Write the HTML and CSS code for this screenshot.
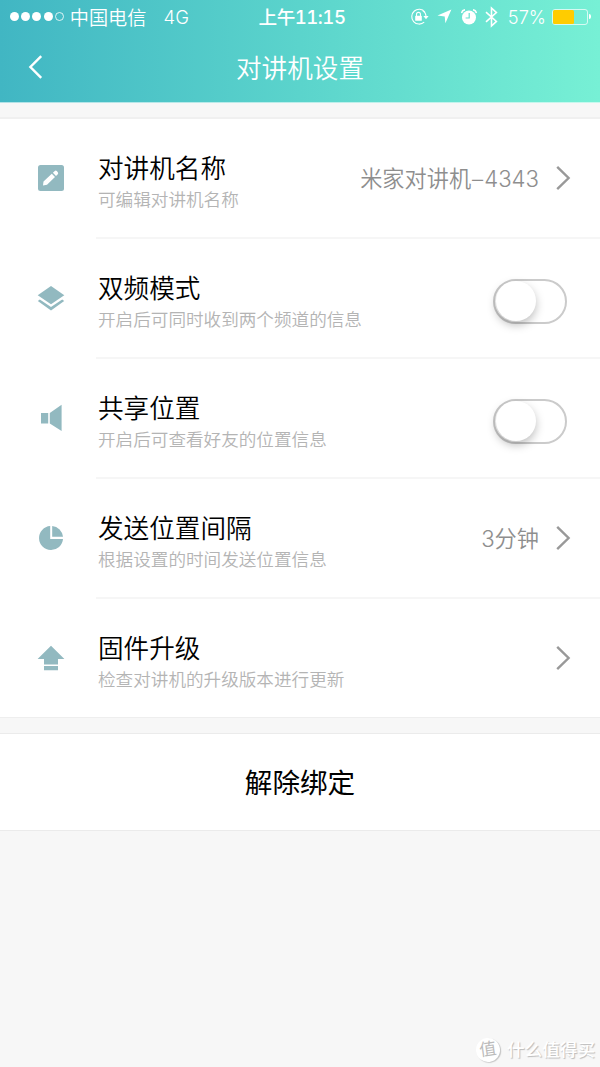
FILE: index.html
```html
<!DOCTYPE html>
<html lang="zh-CN">
<head>
    <meta charset="UTF-8">
    <meta name="viewport" content="width=device-width, initial-scale=1.0">
    <title>对讲机设置</title>
    <link rel="stylesheet" href="styles.css">
</head>
<body>
    <header class="header">
        <div class="status">
            <div class="status-left">
                <div class="signal"><i></i><i></i><i></i><i></i><i class="empty"></i></div>
                <span class="carrier">中国电信</span>
                <span class="network">4G</span>
            </div>
            <div class="time">上午11:15</div>
            <div class="status-right">
                <svg class="lock" width="19" height="18" viewBox="0 0 19 18">
                    <path d="M14.9 4 A7.4 7.4 0 1 0 14.2 14.1 M12.6 2.5 A7.4 7.4 0 0 1 16 9" fill="none" stroke="#fff" stroke-width="1.1"/>
                    <path d="M13.4 8h5.2L16 11.2z" fill="#fff"/>
                    <rect x="5.2" y="7.8" width="6.6" height="5" rx=".6" fill="#fff"/>
                    <path d="M6.5 8V6.4a2 2 0 0 1 4 0V8" fill="none" stroke="#fff" stroke-width="1.1"/>
                </svg>
                <svg class="location" width="15" height="15" viewBox="0 0 15 15">
                    <path d="M14.4.5 8.4 14.3 7.7 7.4.5 6.6z" fill="#fff"/>
                </svg>
                <svg class="alarm" width="16" height="16" viewBox="0 0 16 16">
                    <circle cx="8" cy="8.5" r="7" fill="#fff"/>
                    <path d="M.6 4.2A4 4 0 0 1 4 .8M15.4 4.2A4 4 0 0 0 12 .8" fill="none" stroke="#fff" stroke-width="1.4"/>
                    <path d="M8.2 4v5H4.6" fill="none" stroke="#66dfcf" stroke-width="1.2"/>
                </svg>
                <svg class="bluetooth" width="13" height="22" viewBox="0 0 13 22">
                    <path d="M1 6.2 11.4 15.4 6.5 20V2L11.4 6.6 1 15.8" fill="none" stroke="#fff" stroke-width="1.6"/>
                </svg>
                <span class="percent">57%</span>
                <div class="battery"><div class="level"></div></div>
                <div class="battery-cap"></div>
            </div>
        </div>
        <div class="nav">
            <svg class="back" width="16" height="24" viewBox="0 0 16 24">
                <path d="M13.2 1.2 2.4 12l10.8 10.8" fill="none" stroke="#fff" stroke-width="2.4"/>
            </svg>
            <h1 class="title">对讲机设置</h1>
        </div>
    </header>

    <ul class="list">
        <li class="item">
            <div class="icon">
                <svg width="28" height="28" viewBox="0 0 28 28">
                    <rect x="1" y="1" width="26" height="26" rx="2.5" fill="#92b9c0"/>
                    <path d="M6 21.6 6.5 17.6 14.8 9.8 18 13 10 20.8zM15.9 8.8 17.8 7Q18.8 6.2 19.8 7.1L20.8 8.2Q21.6 9.2 20.8 10.2L19 12z" fill="#fff"/>
                </svg>
            </div>
            <div class="body">
                <div class="text">
                    <div class="name">对讲机名称</div>
                    <div class="desc">可编辑对讲机名称</div>
                </div>
                <div class="value">米家对讲机<span class="dash">–</span>4343</div>
                <svg class="arrow" width="15" height="26" viewBox="0 0 15 26"><path d="M1.2 1.8 12.6 13 1.2 24.2" fill="none" stroke="#999" stroke-width="2.4"/></svg>
            </div>
        </li>
        <li class="item">
            <div class="icon">
                <svg width="28" height="28" viewBox="0 0 28 28">
                    <path d="M14 2 27.3 11.2 14 20.2.7 11.2z" fill="#92b9c0"/>
                    <path d="M.8 17.1 2.8 15.6 14 23 25.2 15.6 27.2 17.1 14 26.4z" fill="#92b9c0"/>
                </svg>
            </div>
            <div class="body">
                <div class="text">
                    <div class="name">双频模式</div>
                    <div class="desc">开启后可同时收到两个频道的信息</div>
                </div>
                <div class="switch"><div class="knob"></div></div>
            </div>
        </li>
        <li class="item">
            <div class="icon">
                <svg width="28" height="28" viewBox="0 0 28 28">
                    <path d="M4 9h7.2v10.4H4zM12.8 9 24.6.8v26.3L12.8 19.4z" fill="#92b9c0"/>
                </svg>
            </div>
            <div class="body">
                <div class="text">
                    <div class="name">共享位置</div>
                    <div class="desc">开启后可查看好友的位置信息</div>
                </div>
                <div class="switch"><div class="knob"></div></div>
            </div>
        </li>
        <li class="item">
            <div class="icon">
                <svg width="28" height="28" viewBox="0 0 28 28">
                    <path d="M13.2 2A12 12 0 1 0 26 14.9H13.2z" fill="#92b9c0"/>
                    <path d="M15.2 2A12 12 0 0 1 26 12.8H15.2z" fill="#92b9c0"/>
                </svg>
            </div>
            <div class="body">
                <div class="text">
                    <div class="name">发送位置间隔</div>
                    <div class="desc">根据设置的时间发送位置信息</div>
                </div>
                <div class="value">3分钟</div>
                <svg class="arrow" width="15" height="26" viewBox="0 0 15 26"><path d="M1.2 1.8 12.6 13 1.2 24.2" fill="none" stroke="#999" stroke-width="2.4"/></svg>
            </div>
        </li>
        <li class="item">
            <div class="icon">
                <svg width="28" height="28" viewBox="0 0 28 28">
                    <path d="M14 1.8 27.4 15H21v5.4H7V15H.6zM7 22.1h14v4.2H7z" fill="#92b9c0"/>
                </svg>
            </div>
            <div class="body">
                <div class="text">
                    <div class="name">固件升级</div>
                    <div class="desc">检查对讲机的升级版本进行更新</div>
                </div>
                <svg class="arrow" width="15" height="26" viewBox="0 0 15 26"><path d="M1.2 1.8 12.6 13 1.2 24.2" fill="none" stroke="#999" stroke-width="2.4"/></svg>
            </div>
        </li>
    </ul>

    <button class="unbind">解除绑定</button>

    <footer class="watermark">
        <span class="logo">值</span>
        <span class="brand">什么值得买</span>
    </footer>
</body>
</html>
```

FILE: styles.css
```css
* {
    box-sizing: border-box;
}

body {
    margin: 0;
    height: 1067px;
    display: flex;
    flex-direction: column;
    background-color: #f7f7f7;
    font-family: Inter, "Noto Sans CJK SC", sans-serif;
    font-weight: 350;
    color: #000;
    overflow: hidden;
}

/* header */
.header {
    height: 103px;
    background: linear-gradient(to right, #41b6c3, #5bd4cc 50%, #77f0d5);
    border-bottom: 1px solid rgba(255, 255, 255, 0.6);
    color: #fff;
}

.status {
    height: 32px;
    display: grid;
    grid-template-columns: 1fr auto 1fr;
    align-items: center;
    padding: 0 9px 0 10px;
    font-size: 19px;
    line-height: 32px;
}

.status-left, .status-right {
    display: flex;
    align-items: center;
    height: 32px;
}

.status-right {
    justify-content: flex-end;
}

.signal {
    display: flex;
    gap: 2.2px;
}

.signal i {
    width: 9px;
    height: 9px;
    border-radius: 50%;
    background-color: #fff;
}

.signal .empty {
    background: none;
    border: 1px solid rgba(255, 255, 255, 0.8);
}

.carrier {
    margin-left: 6px;
    padding-top: 2px;
    font-size: 19.2px;
}

.network {
    margin-left: 17px;
    padding-top: 1px;
    font-size: 18.5px;
}

.time {
    margin-left: 3px;
    padding-top: 1px;
    font-size: 18.6px;
    font-weight: 500;
    font-feature-settings: "tnum";
    letter-spacing: -0.5px;
}

.lock {
    margin-right: -1px;
}

.location {
    margin-left: 9px;
}

.alarm {
    margin-left: 9px;
}

.bluetooth {
    margin-left: 8px;
}

.percent {
    margin-left: 10px;
    padding-top: 1px;
    font-size: 18.3px;
}

.battery {
    width: 36px;
    height: 16px;
    margin-left: 6px;
    border: 1px solid rgba(255, 255, 255, 0.7);
    border-radius: 3px;
}

.level {
    width: 21px;
    height: 14px;
    border-radius: 1.5px;
    background-color: #ffcc00;
}

.battery-cap {
    width: 2px;
    height: 5px;
    margin-left: 1px;
    border-radius: 0 2px 2px 0;
    background-color: #fff;
}

.nav {
    height: 70px;
    display: grid;
    grid-template-columns: 60px 1fr 60px;
    align-items: center;
}

.back {
    margin-left: 28px;
}

.title {
    margin: 0;
    padding-top: 3px;
    text-align: center;
    font-size: 25.6px;
    line-height: 67px;
    font-weight: 350;
}

/* settings list */
.list {
    margin: 14px 0 0;
    padding: 0;
    list-style: none;
    background-color: #fff;
    border-top: 2px solid #f0f0f0;
}

.item {
    height: 120px;
    display: flex;
}

.icon {
    width: 96px;
    padding: 45px 0 0 37px;
}

.body {
    flex: 1;
    display: flex;
    align-items: center;
    padding: 0 29px 0 2px;
    border-bottom: 2px solid #f6f6f6;
}

.item:last-child {
    height: 119px;
    border-bottom: 1px solid #eee;
}

.item:last-child .body {
    border-bottom: none;
}

.text {
    flex: 1;
    padding-top: 10px;
}

.name {
    font-size: 25.6px;
    line-height: 34px;
}

.desc {
    font-size: 17.6px;
    line-height: 28px;
    color: #b4b4b4;
}

.value {
    padding-top: 1px;
    font-size: 22.2px;
    line-height: 30px;
    color: #8e8e8e;
}

.dash {
    margin: 0 1px;
}

.arrow {
    margin-left: 17px;
}

.switch {
    width: 74px;
    height: 45px;
    margin: 6px 4px 0 0;
    padding-left: 0.5px;
    border: 2.5px solid #cbcbcb;
    border-radius: 23px;
}

.knob {
    width: 40px;
    height: 40px;
    border-radius: 50%;
    background-color: #fff;
    box-shadow: 0 4px 10px rgba(0, 0, 0, 0.26);
}

.unbind {
    height: 98px;
    margin-top: 15px;
    padding: 0 0 2px;
    background-color: #fff;
    border: solid #ebebeb;
    border-width: 1px 0;
    font-family: inherit;
    font-size: 27.6px;
    font-weight: 400;
    color: #000;
}

/* watermark */
.watermark {
    display: flex;
    align-items: center;
    justify-content: flex-end;
    gap: 7px;
    margin-top: auto;
    padding: 0 5px 5px 0;
    color: #fff;
    text-shadow: 1px 1px 1px #bbb;
}

.logo {
    width: 24px;
    height: 24px;
    border-radius: 50%;
    background-color: #fff;
    box-shadow: 1px 1px 1px #c4c4c4;
    text-align: center;
    font-size: 17px;
    font-weight: 400;
    line-height: 23px;
    color: #bbb;
    text-shadow: none;
    transform: rotate(-8deg);
}

.brand {
    font-size: 17.6px;
    font-weight: 500;
    line-height: 24px;
}
```
